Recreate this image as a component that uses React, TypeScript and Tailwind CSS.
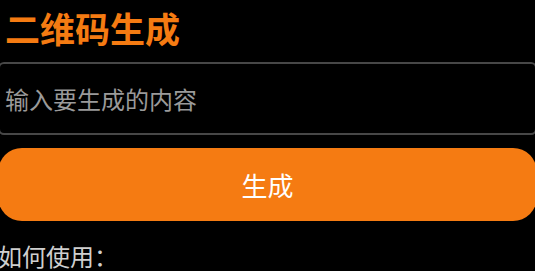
export default function App() {
  return (
    <div className="min-h-screen overflow-hidden bg-black font-['Noto_Sans_CJK_SC',sans-serif]">
      <div className="-ml-[2px] w-[539px]">
        <h1 className="pl-[7px] pt-[7px] text-[35px] font-bold leading-[42px] text-[#f57b12]">二维码生成</h1>
        <input
          type="text"
          placeholder="输入要生成的内容"
          className="mt-[13px] block h-[73px] w-full rounded-[6px] border-2 border-[#474747] bg-black px-[5px] text-[24px] text-white outline-none placeholder:text-[#9a9a9a]"
        />
        <button className="mt-[13px] block h-[73px] w-full rounded-[24px] bg-[#f57b12] text-[26px] text-white">
          生成
        </button>
        <p className="mt-[17px] text-[24px] leading-[36px] text-[#cfcfcf]">如何使用：</p>
      </div>
    </div>
  )
}
